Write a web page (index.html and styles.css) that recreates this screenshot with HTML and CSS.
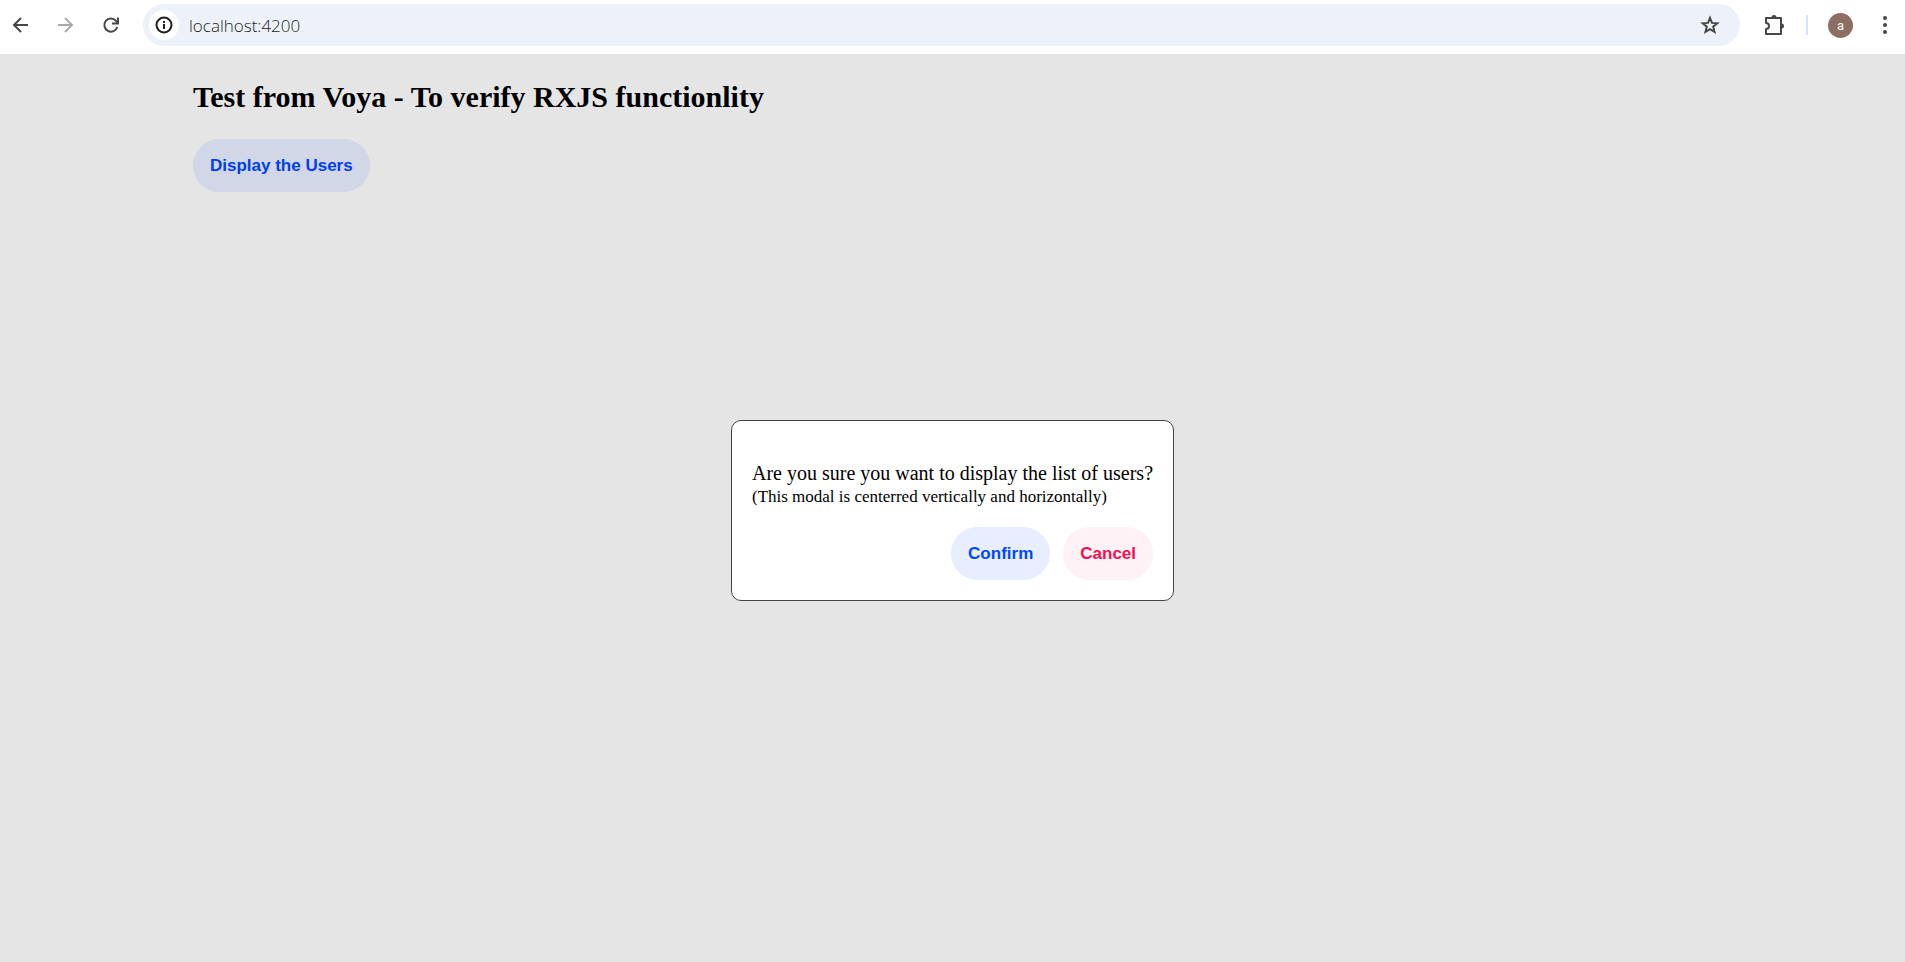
FILE: index.html
```html
<!DOCTYPE html>
<html lang="en">
<head>
<meta charset="utf-8">
<meta name="viewport" content="width=device-width, initial-scale=1">
<title>Users</title>
<link rel="stylesheet" href="styles.css">
</head>
<body>
<header class="toolbar">
  <nav class="nav" aria-label="Navigation">
    <button class="icon-button" type="button" aria-label="Back">
      <svg width="24" height="24" viewBox="0 0 24 24" fill="none" stroke="#474747" stroke-width="2"><path d="M19 12H6M12 5l-7 7 7 7"/></svg>
    </button>
    <button class="icon-button" type="button" aria-label="Forward" disabled>
      <svg width="24" height="24" viewBox="0 0 24 24" fill="none" stroke="#ababab" stroke-width="2"><path d="M4 12H17M11 5l7 7-7 7"/></svg>
    </button>
    <button class="icon-button" type="button" aria-label="Reload">
      <svg width="24" height="24" viewBox="0 0 24 24" fill="none" stroke="#474747" stroke-width="2"><path d="M18.300 14A6.600 6.600 0 1 1 17 7.800L18.800 9.800M19 4.500V10.500H13"/></svg>
    </button>
  </nav>
  <div class="address">
    <button class="site-info" type="button" aria-label="Site information">
      <svg width="20" height="20" viewBox="0 0 20 20" fill="none" stroke="#1f1f1f" stroke-width="2"><circle cx="10" cy="10" r="7.500"/><path d="M10 9v5M10 6v2"/></svg>
    </button>
    <input class="url" type="text" value="localhost:4200" aria-label="Address">
    <button class="icon-button" type="button" aria-label="Bookmark">
      <svg width="24" height="24" viewBox="0 0 24 24" fill="none" stroke="#474747" stroke-width="2"><path d="M12 5l2 4.900 5.300.400-4.100 3.400 1.300 5.100L12 16.100l-4.500 2.700 1.300-5.100-4.100-3.400 5.300-.400z"/></svg>
    </button>
  </div>
  <div class="actions">
    <button class="icon-button" type="button" aria-label="Extensions">
      <svg width="24" height="24" viewBox="0 0 24 24"><path d="M4 5h15v16H4v-5a2.600 2.600 0 0 0 0-6z" fill="none" stroke="#474747" stroke-width="2" stroke-linejoin="round"/><path d="M9.500 4.500a2.500 2.500 0 0 1 5 0zM19.500 10.500a2.500 2.500 0 0 1 0 5z" fill="#474747"/></svg>
    </button>
    <span class="divider"></span>
    <button class="avatar" type="button" aria-label="Profile">a</button>
    <button class="icon-button" type="button" aria-label="Menu">
      <svg width="24" height="24" viewBox="0 0 24 24" fill="#474747"><circle cx="12" cy="5" r="2"/><circle cx="12" cy="12" r="2"/><circle cx="12" cy="19" r="2"/></svg>
    </button>
  </div>
</header>
<div class="page">
  <main class="content">
    <h1 class="title">Test from Voya - To verify RXJS functionlity</h1>
    <button class="button button-display" type="button">Display the Users</button>
  </main>
  <div class="overlay">
    <div class="modal" role="dialog" aria-modal="true" aria-labelledby="question">
      <p class="question" id="question">Are you sure you want to display the list of users?</p>
      <p class="note">(This modal is centerred vertically and horizontally)</p>
      <div class="modal-actions">
        <button class="button button-confirm" type="button">Confirm</button>
        <button class="button button-cancel" type="button">Cancel</button>
      </div>
    </div>
  </div>
</div>
</body>
</html>
```

FILE: styles.css
```css
* {
  box-sizing: border-box;
}

body {
  display: flex;
  flex-direction: column;
  min-height: 100vh;
  margin: 0;
  background: #e5e5e5;
  color: #000;
  font-family: "Liberation Serif", "Times New Roman", serif;
}

button {
  border: 0;
  cursor: pointer;
}

.toolbar {
  display: flex;
  align-items: center;
  padding: 4px 8px 8px 9px;
  background: #fff;
}

.nav {
  display: flex;
  gap: 21px;
  margin-right: 20px;
}

.icon-button {
  display: flex;
  flex: none;
  padding: 0;
  background: none;
}

.address {
  display: flex;
  flex: 1;
  align-items: center;
  height: 42px;
  padding: 0 18px 0 6px;
  border-radius: 21px;
  background: #ecf1fa;
}

.site-info {
  display: flex;
  flex: none;
  align-items: center;
  justify-content: center;
  width: 30px;
  height: 30px;
  padding: 0;
  border-radius: 50%;
  background: #fff;
}

.url {
  flex: 1;
  min-width: 0;
  padding: 0 10px;
  border: 0;
  outline: 0;
  background: none;
  color: #1f1f1f;
  font: 300 17px "Open Sans", "Noto Sans", sans-serif;
}

.actions {
  display: flex;
  align-items: center;
  gap: 20px;
  margin-left: 22px;
}

.divider {
  width: 2px;
  height: 20px;
  background: #d3e3fd;
}

.avatar {
  width: 25px;
  height: 25px;
  padding: 0;
  border-radius: 50%;
  background: #8d6e63;
  color: #fff;
  font: 13px Roboto, sans-serif;
}

.page {
  display: grid;
  flex: 1;
}

.content,
.overlay {
  grid-area: 1 / 1;
}

.content {
  width: 80%;
  max-width: 1519px;
  margin: 0 auto;
}

.title {
  margin: 25px 0;
  font-size: 30px;
  line-height: 35px;
}

.button {
  padding: 16px 17px;
  border-radius: 27px;
  font: bold 17px/21px "Liberation Sans", Arial, sans-serif;
}

.button-display {
  background: #d1d7e6;
  color: #0040e6;
}

.overlay {
  display: flex;
  align-items: center;
  justify-content: center;
  padding-top: 5px;
  pointer-events: none;
}

.modal {
  padding: 40px 20px 20px;
  border: 1px solid #444;
  border-radius: 10px;
  background: #fff;
  pointer-events: auto;
}

.question,
.note {
  margin: 0;
}

.question {
  font-size: 20px;
  line-height: 24px;
}

.note {
  font-size: 17px;
  line-height: 24px;
}

.modal-actions {
  display: flex;
  justify-content: flex-end;
  gap: 13px;
  margin-top: 18px;
}

.button-confirm {
  background: #e8eeff;
  color: #0047ff;
}

.button-cancel {
  background: #fff2f6;
  color: #f2114f;
}
```
